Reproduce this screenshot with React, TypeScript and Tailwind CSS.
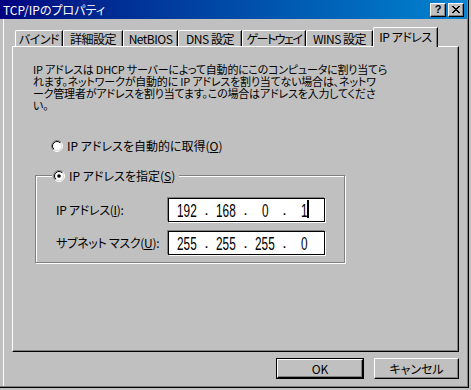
const ui = "font-['Noto_Sans_CJK_JP','Noto_Sans',sans-serif] [font-feature-settings:'palt']";

function Radio({ checked, id }: { checked?: boolean; id: string }) {
    return (
        <svg width="12" height="12" viewBox="0 0 12 12" className="shrink-0">
            <defs>
                <linearGradient id={id + "o"} x1="0" y1="0" x2="1" y2="1">
                    <stop offset="0.5" stopColor="#808080" />
                    <stop offset="0.5" stopColor="#ffffff" />
                </linearGradient>
                <linearGradient id={id + "i"} x1="0" y1="0" x2="1" y2="1">
                    <stop offset="0.5" stopColor="#000000" />
                    <stop offset="0.5" stopColor="#dfdfdf" />
                </linearGradient>
            </defs>
            <circle cx="6" cy="6" r="5.5" fill="none" stroke={`url(#${id}o)`} />
            <circle cx="6" cy="6" r="4.5" fill="#fff" stroke={`url(#${id}i)`} />
            {checked && <circle cx="6" cy="6" r="1.8" fill="#000" />}
        </svg>
    );
}

function IpBox({ parts, cursor }: { parts: string[]; cursor?: boolean }) {
    return (
        <div className="w-[157px] h-[24px] bg-white border border-black shadow-[-1px_-1px_0_#808080,1px_1px_0_#ffffff] flex items-center pl-[2px] font-['Liberation_Sans',sans-serif] text-[19px] text-black">
            {parts.map((p, i) => (
                <div key={i} className="flex items-center">
                    <span className="w-[32px] flex justify-center relative">
                        <span className="inline-block scale-x-[0.62] leading-none">{p}</span>
                        {cursor && i === 3 && (
                            <span className="absolute left-[19px] top-[-1px] w-[2px] h-[18px] bg-black" />
                        )}
                    </span>
                    {i < 3 && <span className="w-[7px] flex justify-center leading-none text-[16px]">.</span>}
                </div>
            ))}
        </div>
    );
}

function Button({ label, isDefault, w }: { label: string; isDefault?: boolean; w: string }) {
    return (
        <div className={`${w} h-[21px] ${isDefault ? "border border-black" : ""}`}>
            <div className="w-full h-full border-t border-l border-white border-r border-b border-r-black border-b-black shadow-[inset_-1px_-1px_#808080] flex items-center justify-center text-[12px] leading-none text-black">
                {label}
            </div>
        </div>
    );
}

const tabs = [
    { label: "バインド", w: "w-[48px]", t: "tracking-[-0.5px]" },
    { label: "詳細設定", w: "w-[60px]", t: "tracking-[-0.5px]" },
    { label: "NetBIOS", w: "w-[55px]", t: "tracking-[-0.5px]" },
    { label: "DNS 設定", w: "w-[64px]", t: "tracking-[-0.5px]" },
    { label: "ゲートウェイ", w: "w-[64px]", t: "tracking-[-1.5px]" },
    { label: "WINS 設定", w: "w-[67px]", t: "tracking-[-0.5px]" },
];

export default function App() {
    return (
        <div className={`w-[471px] h-[390px] bg-[#c0c0c0] overflow-hidden ${ui}`}>
            <div className="w-[469px] h-[388px] border-r border-b border-black">
                <div className="h-full flex flex-col border-r border-b border-[#808080]">
                    {/* title bar */}
                    <div className="h-[19px] shrink-0 flex items-center justify-between bg-gradient-to-r from-[#000080] to-[#1084d0] pl-[3px] pr-[3px]">
                        <span className="text-white text-[12px] leading-none">TCP/IPのプロパティ</span>
                        <div className="flex gap-[2px]">
                            <div className="w-[16px] h-[14px] bg-[#c0c0c0] border-t border-l border-white border-r border-b border-r-black border-b-black shadow-[inset_-1px_-1px_#808080] flex items-center justify-center font-['Liberation_Sans',sans-serif] text-[11px] font-bold leading-none text-black">
                                ?
                            </div>
                            <div className="w-[16px] h-[14px] bg-[#c0c0c0] border-t border-l border-white border-r border-b border-r-black border-b-black shadow-[inset_-1px_-1px_#808080] flex items-center justify-center">
                                <svg width="8" height="7" viewBox="0 0 8 7">
                                    <path d="M0 0h2v1h1v1h2V1h1V0h2v1H7v1H6v1H5v1h1v1h1v1h1v1H6V6H5V5H3v1H2v1H0V6h1V5h1V4h1V3H2V2H1V1H0z" fill="#000" />
                                </svg>
                            </div>
                        </div>
                    </div>

                    {/* body */}
                    <div className="flex-1 ml-[3px] border-l border-white flex flex-col">
                        <div className="ml-[8px] mt-[8px] h-[19px] pl-[3px] flex items-end relative z-10">
                            {tabs.map((t) => (
                                <div
                                    key={t.label}
                                    className={`${t.w} ${t.t} h-[16px] border-t border-l border-white border-r border-r-black shadow-[inset_-1px_0_#808080] rounded-tl-[2px] flex items-center justify-center text-[12px] leading-none text-black whitespace-nowrap`}
                                >
                                    {t.label}
                                </div>
                            ))}
                            <div className="w-[65px] h-[20px] -mb-[1px] bg-[#c0c0c0] border-t border-l border-white border-r border-r-black shadow-[inset_-1px_0_#808080] rounded-tl-[2px] flex items-start pt-[3px] justify-center text-[12px] leading-none tracking-[-0.5px] text-black whitespace-nowrap">
                                IP アドレス
                            </div>
                        </div>

                        <div className="ml-[8px] w-[447px] h-[306px] border-t border-l border-white border-r border-b border-r-black border-b-black shadow-[inset_-1px_-1px_#808080] flex flex-col">
                            <p className="pl-[20px] pt-[16px] text-[11px] leading-[12px] text-black whitespace-nowrap tracking-[-0.2px]">
                                IP アドレスは DHCP サーバーによって自動的にこのコンピュータに割り当てら
                                <br />
                                れます。ネットワークが自動的に IP アドレスを割り当てない場合は、ネットワ
                                <br />
                                ーク管理者がアドレスを割り当てます。この場合はアドレスを入力してくださ
                                <br />
                                い。
                            </p>

                            <div className="mt-[28px] ml-[38px] flex items-center gap-[4px] h-[13px] text-[12px] leading-none text-black">
                                <Radio id="r1" />
                                <span>IP アドレスを自動的に取得(<span className="underline">O</span>)</span>
                            </div>

                            <div className="mt-[23px] ml-[22px] w-[310px] h-[88px] border border-[#808080] shadow-[inset_1px_1px_#ffffff,1px_1px_0_#ffffff] relative pt-[22px] pl-[20px] flex flex-col gap-[9px]">
                                <div className="absolute left-[16px] -top-[7px] bg-[#c0c0c0] pl-[1px] pr-[4px] flex items-center gap-[4px] h-[13px] text-[12px] leading-none text-black">
                                    <Radio id="r2" checked />
                                    <span>IP アドレスを指定(<span className="underline">S</span>)</span>
                                </div>
                                <div className="flex items-center">
                                    <span className="w-[112px] text-[12px] leading-none whitespace-nowrap tracking-[-0.3px] text-black">IP アドレス(<span className="underline">I</span>):</span>
                                    <IpBox parts={["192", "168", "0", "1"]} cursor />
                                </div>
                                <div className="flex items-center">
                                    <span className="w-[112px] text-[12px] leading-none whitespace-nowrap tracking-[-0.3px] text-black">サブネット マスク(<span className="underline">U</span>):</span>
                                    <IpBox parts={["255", "255", "255", "0"]} />
                                </div>
                            </div>
                        </div>

                        <div className="ml-[8px] w-[447px] mt-[6px] flex justify-end gap-[10px]">
                            <Button label="OK" isDefault w="w-[88px]" />
                            <Button label="キャンセル" w="w-[85px]" />
                        </div>
                    </div>
                </div>
            </div>
        </div>
    );
}
